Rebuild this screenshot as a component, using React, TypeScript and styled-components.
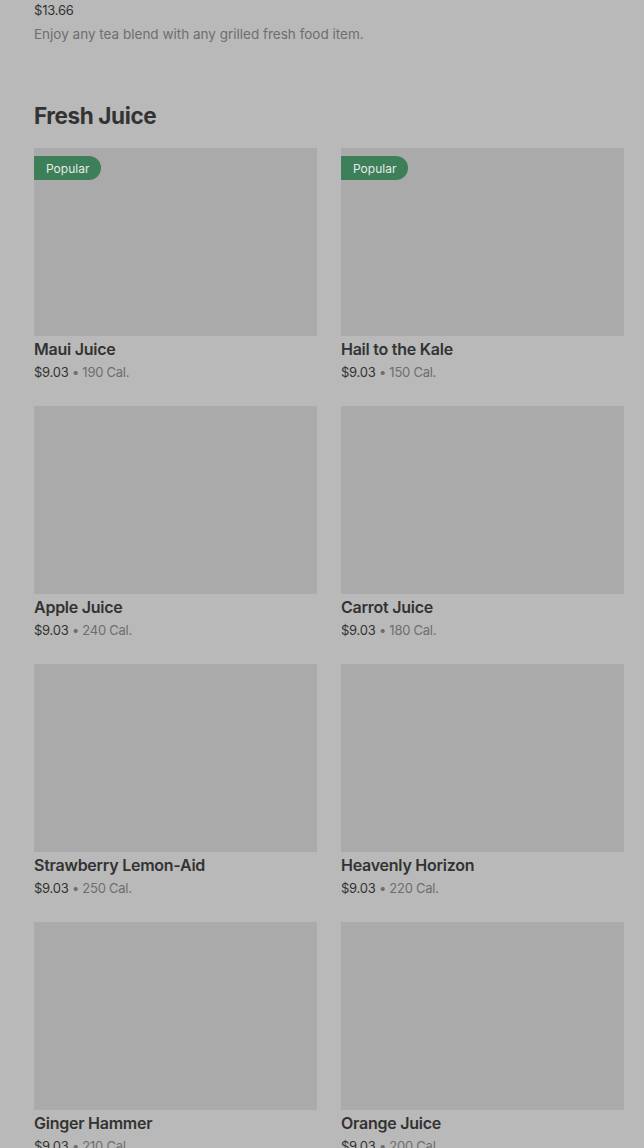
import { createGlobalStyle, styled } from "styled-components";

// Types
type Juice = {
  name: string;
  price: string;
  calories: number;
  popular?: boolean;
};

const juices: Juice[] = [
  { name: "Maui Juice", price: "$9.03", calories: 190, popular: true },
  { name: "Hail to the Kale", price: "$9.03", calories: 150, popular: true },
  { name: "Apple Juice", price: "$9.03", calories: 240 },
  { name: "Carrot Juice", price: "$9.03", calories: 180 },
  { name: "Strawberry Lemon-Aid", price: "$9.03", calories: 250 },
  { name: "Heavenly Horizon", price: "$9.03", calories: 220 },
  { name: "Ginger Hammer", price: "$9.03", calories: 210 },
  { name: "Orange Juice", price: "$9.03", calories: 200 },
];

const GlobalStyle = createGlobalStyle`
  html, body {
    margin: 0;
    background: #b9b9b9;
    font-family: Inter, "Noto Sans", Roboto, sans-serif;
    overflow: hidden;
  }
`;

// Styled Components
const Page = styled.div`
  padding: 0 20px 0 34px;
  height: 1148px;
  overflow: hidden;
`;

const Promo = styled.div`
  display: flex;
  flex-direction: column;
  gap: 4px;
`;

const PromoPrice = styled.div`
  font-size: 13px;
  line-height: 20px;
  color: #333;
  letter-spacing: -0.2px;
`;

const PromoText = styled.div`
  font-size: 13.5px;
  line-height: 20px;
  color: #6e6e6e;
`;

const SectionTitle = styled.h2`
  margin: 56px 0 16px;
  font-size: 22.5px;
  line-height: 32px;
  font-weight: 700;
  color: #333;
  letter-spacing: -0.4px;
`;

const Grid = styled.div`
  display: grid;
  grid-template-columns: repeat(2, 283px);
  column-gap: 24px;
  row-gap: 25px;
`;

const Card = styled.div`
  display: flex;
  flex-direction: column;
`;

const Thumb = styled.div`
  position: relative;
  height: 188px;
  background: #aaaaaa;
`;

const Badge = styled.span`
  position: absolute;
  top: 8px;
  left: 0;
  height: 24px;
  padding: 0 12px;
  display: flex;
  align-items: center;
  background: #3c7f58;
  color: #e4ece7;
  font-size: 12px;
  border-radius: 0 12px 12px 0;
`;

const Name = styled.div`
  margin-top: 2px;
  font-size: 16px;
  line-height: 22px;
  font-weight: 600;
  color: #333;
  letter-spacing: -0.25px;
`;

const Meta = styled.div`
  margin-top: 3px;
  font-size: 13px;
  line-height: 18px;
  color: #6e6e6e;
  letter-spacing: -0.25px;
`;

const Price = styled.span`
  color: #333;
`;

export default function App() {
  return (
    <>
      <GlobalStyle />
      <Page>
        <Promo>
          <PromoPrice>$13.66</PromoPrice>
          <PromoText>Enjoy any tea blend with any grilled fresh food item.</PromoText>
        </Promo>
        <SectionTitle>Fresh Juice</SectionTitle>
        <Grid>
          {juices.map((j) => (
            <Card key={j.name}>
              <Thumb>{j.popular && <Badge>Popular</Badge>}</Thumb>
              <Name>{j.name}</Name>
              <Meta>
                <Price>{j.price}</Price> • {j.calories} Cal.
              </Meta>
            </Card>
          ))}
        </Grid>
      </Page>
    </>
  );
}
